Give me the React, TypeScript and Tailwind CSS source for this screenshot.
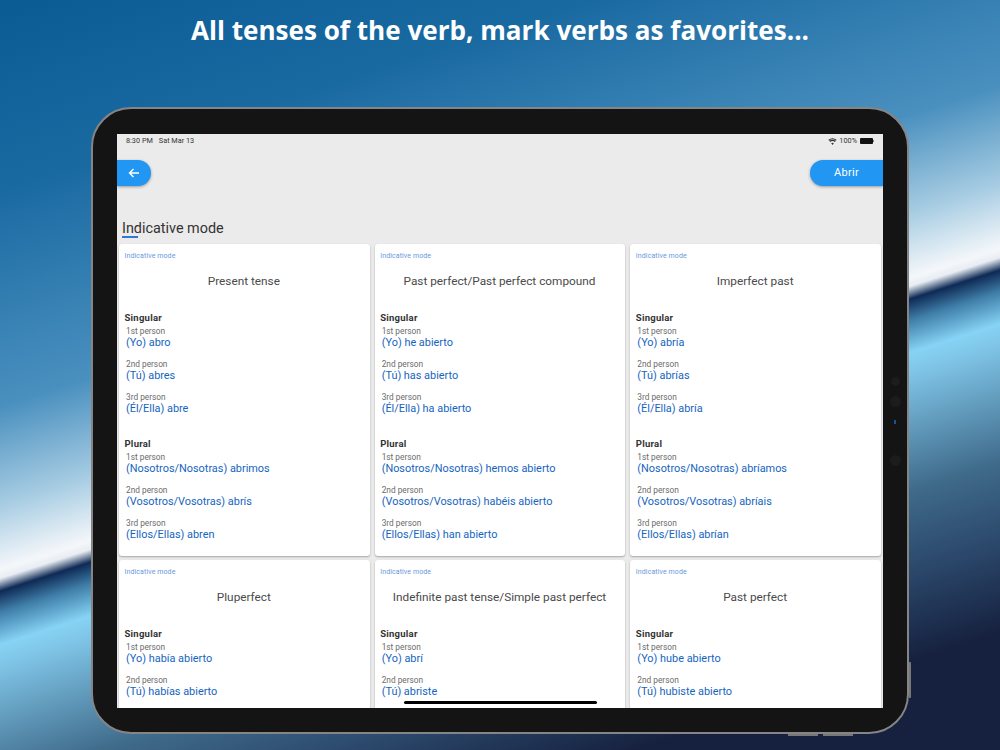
type CardData = { title: string; sing: string[]; plur: string[] };

const cards: CardData[] = [
  { title: "Present tense", sing: ["(Yo) abro", "(Tú) abres", "(Él/Ella) abre"], plur: ["(Nosotros/Nosotras) abrimos", "(Vosotros/Vosotras) abrís", "(Ellos/Ellas) abren"] },
  { title: "Past perfect/Past perfect compound", sing: ["(Yo) he abierto", "(Tú) has abierto", "(Él/Ella) ha abierto"], plur: ["(Nosotros/Nosotras) hemos abierto", "(Vosotros/Vosotras) habéis abierto", "(Ellos/Ellas) han abierto"] },
  { title: "Imperfect past", sing: ["(Yo) abría", "(Tú) abrías", "(Él/Ella) abría"], plur: ["(Nosotros/Nosotras) abríamos", "(Vosotros/Vosotras) abríais", "(Ellos/Ellas) abrían"] },
  { title: "Pluperfect", sing: ["(Yo) había abierto", "(Tú) habías abierto"], plur: [] },
  { title: "Indefinite past tense/Simple past perfect", sing: ["(Yo) abrí", "(Tú) abriste"], plur: [] },
  { title: "Past perfect", sing: ["(Yo) hube abierto", "(Tú) hubiste abierto"], plur: [] },
];
const persons = ["1st person", "2nd person", "3rd person"];

function Group({ label, rows }: { label: string; rows: string[] }) {
  return (
    <div>
      <div className="text-[9.5px] leading-[12px] font-bold text-[#333] tracking-[0.25px]">{label}</div>
      <div className="mt-[2px] pl-[1.5px]">
        {rows.map((r, i) => (
          <div key={i} className="h-[33px]">
            <div className="text-[8.3px] leading-[11px] text-[#6b6b6b]">{persons[i]}</div>
            <div className="text-[10.9px] leading-[11px] text-[#1565c0] whitespace-nowrap">{r}</div>
          </div>
        ))}
      </div>
    </div>
  );
}

function Card({ c }: { c: CardData }) {
  return (
    <div className="h-[312px] bg-white rounded-[3px] shadow-[0_1px_2px_rgba(0,0,0,0.3)] pl-[5.5px] pr-[6.5px] pt-[8px]">
      <div className="text-[7px] leading-[8px] text-[#6a97dd] tracking-[0.1px]">Indicative mode</div>
      <div className="mt-[12px] h-[18px] text-center text-[11.8px] leading-[18px] text-[#4a4a4a] whitespace-nowrap">{c.title}</div>
      <div className="mt-[22px] flex flex-col gap-[13px]">
        <Group label="Singular" rows={c.sing} />
        {c.plur.length > 0 && <Group label="Plural" rows={c.plur} />}
      </div>
    </div>
  );
}

export default function App() {
  return (
    <div className="relative w-[1000px] h-[750px] overflow-hidden flex flex-col items-center font-['Roboto',sans-serif] bg-[linear-gradient(162.2deg,#0a5a94_0%,#1a6aa2_18%,#4a90bf_38%,#a5cbe2_47%,#f4f7fa_53.2%,#e8edf3_54%,#0e2a55_55.2%,#3f7ea8_57.2%,#86d3f5_60.2%,#7fc4e6_62.2%,#3f6a8a_73.2%,#2a4669_81%,#16213f_89%,#16213f_100%)]">
      <h1 className="mt-[12px] h-[36px] text-[26.1px] leading-[36px] font-bold text-white font-['Open_Sans',sans-serif] whitespace-nowrap">All tenses of the verb, mark verbs as favorites...</h1>

      <div className="relative mt-[59px] w-[818px] h-[627px] rounded-[40px] border-2 border-[#858585] bg-[#141414] pt-[25px] px-[24px]">
        {/* side buttons */}
        <div className="absolute right-[-4px] top-[553px] w-[2px] h-[36px] bg-[#777] rounded-r-[1px]" />
        <div className="absolute bottom-[-4px] left-[695px] w-[30px] h-[2px] bg-[#777]" />
        <div className="absolute bottom-[-4px] left-[730px] w-[30px] h-[2px] bg-[#777]" />
        {/* sensors */}
        <div className="absolute left-[798px] top-[268px] w-[9px] h-[9px] rounded-full bg-[#1c1c1c]" />
        <div className="absolute left-[797px] top-[287px] w-[11px] h-[11px] rounded-full bg-[#1c1c1c]" />
        <div className="absolute left-[801px] top-[311px] w-[2px] h-[4px] bg-[#1d4f92]" />
        <div className="absolute left-[797px] top-[346px] w-[11px] h-[11px] rounded-full bg-[#1c1c1c]" />

        <div className="relative w-[766px] h-[574px] bg-[#ebebeb] overflow-hidden">
          <div className="h-[13px] flex items-center justify-between pl-[9px] pr-[9px] pt-[1px] text-[7.3px] leading-[10px] text-[#333]">
            <div className="flex gap-[6px]"><span>8:30 PM</span><span>Sat Mar 13</span></div>
            <div className="flex items-center gap-[2px]">
              <svg width="9" height="7" viewBox="0 0 24 18" fill="#333"><path d="M12 18l-3.6-4.4a5.6 5.6 0 0 1 7.2 0zM5.8 10.4a9.6 9.6 0 0 1 12.4 0l2.2-2.8a13.4 13.4 0 0 0-16.8 0zM1 4.6l2 2.4a14.2 14.2 0 0 1 18 0l2-2.4A17.4 17.4 0 0 0 1 4.6z" /></svg>
              <span>100%</span>
              <div className="ml-[1px] flex items-center">
                <div className="w-[13px] h-[6px] rounded-[1px] bg-[#111]" />
                <div className="w-[1px] h-[2px] bg-[#777]" />
              </div>
            </div>
          </div>

          <div className="mt-[13px] h-[26px] flex justify-between">
            <div className="w-[34px] rounded-r-[13px] bg-[#2196f3] shadow-[0_1px_3px_rgba(0,0,0,0.35)] flex items-center justify-center">
              <svg width="12" height="12" viewBox="0 0 24 24" fill="none" stroke="white" strokeWidth="2.8"><path d="M22 12H3M11 4l-8 8 8 8" /></svg>
            </div>
            <div className="w-[73px] rounded-l-[13px] bg-[#2196f3] shadow-[0_1px_3px_rgba(0,0,0,0.35)] flex items-center justify-center text-[11px] text-white tracking-[0.3px]">Abrir</div>
          </div>

          <div className="mt-[34px] pl-[5px] text-[14.4px] leading-[18px] text-[#333]">Indicative mode</div>
          <div className="ml-[5px] mt-[-2px] w-[16px] h-[2px] bg-[#2f78d6]" />

          <div className="mt-[6px] px-[2px] grid grid-cols-3 gap-x-[5px] gap-y-[4px]">
            {cards.map((c, i) => <Card key={i} c={c} />)}
          </div>

          <div className="absolute left-[287px] top-[567px] w-[193px] h-[3px] rounded-full bg-black" />
        </div>
      </div>
    </div>
  );
}
